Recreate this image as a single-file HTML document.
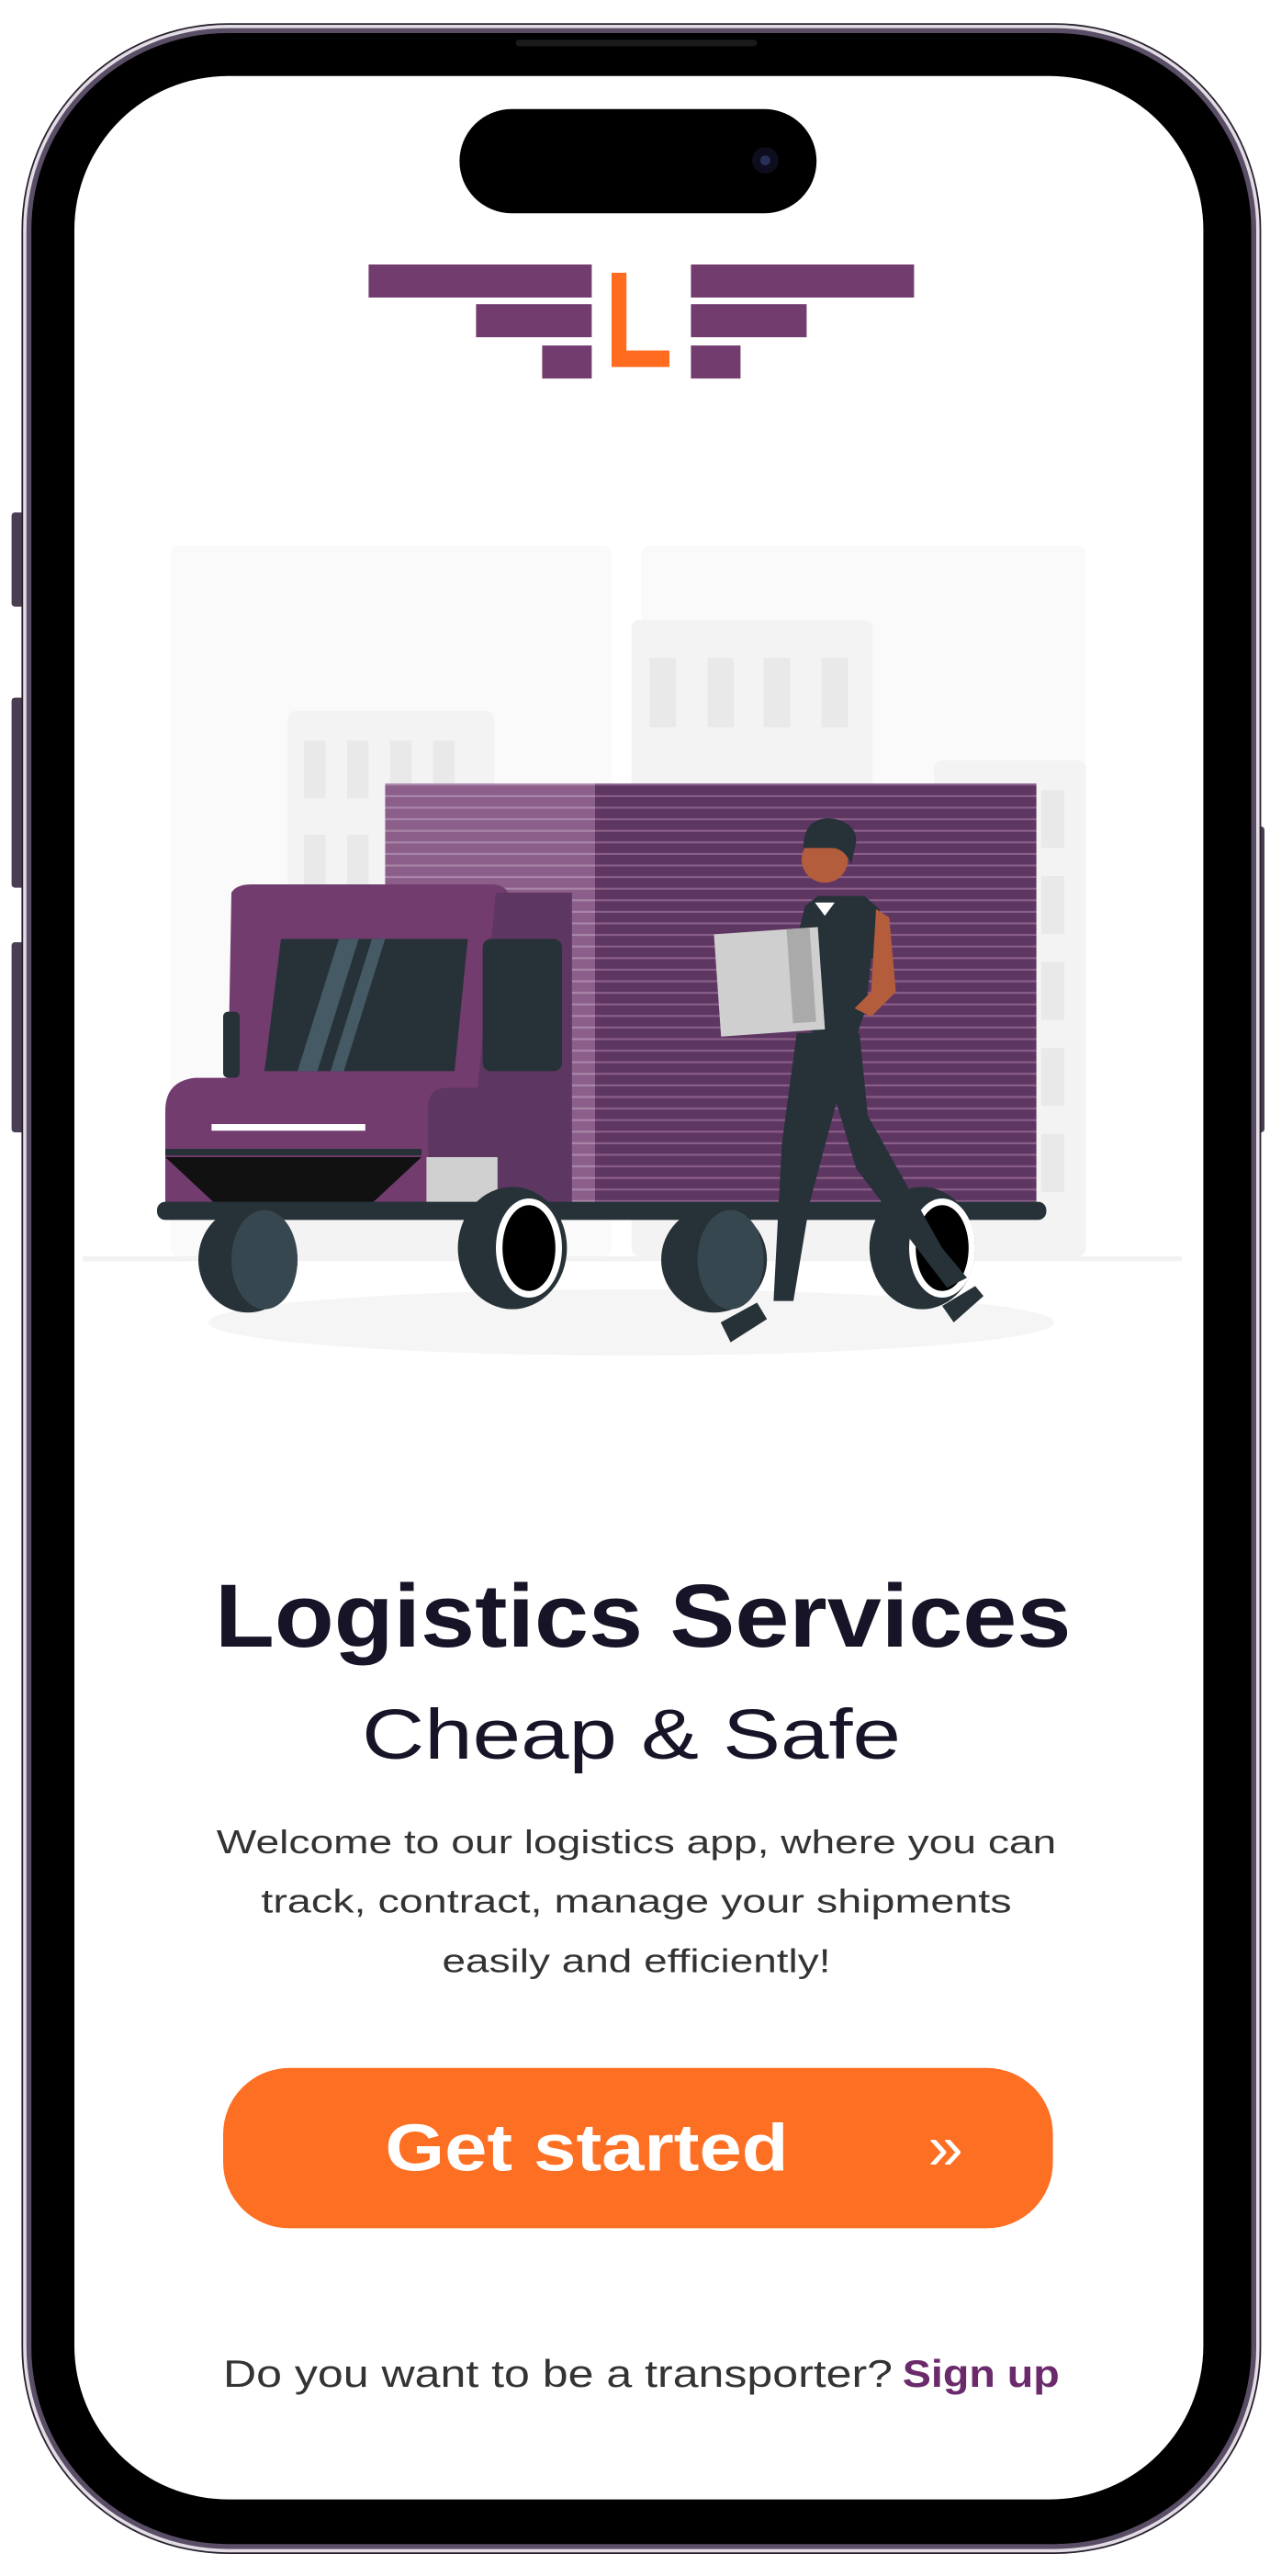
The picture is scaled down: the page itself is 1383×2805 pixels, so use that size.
<!DOCTYPE html>
<html><head><meta charset="utf-8"><style>
html,body{margin:0;padding:0;background:#fff;}
svg{display:block;}
</style></head><body>
<svg width="1383" height="2805" viewBox="0 0 768.33 1558.33" preserveAspectRatio="none" xmlns="http://www.w3.org/2000/svg">
<defs>
<pattern id="st" width="10" height="7" patternUnits="userSpaceOnUse"><rect width="10" height="7" fill="#5e3662"/><rect y="5" width="10" height="1.2" fill="#8a5f88"/></pattern>
<pattern id="st2" width="10" height="7" patternUnits="userSpaceOnUse"><rect width="10" height="7" fill="#8c5f8b"/><rect y="5" width="10" height="1.2" fill="#a986a8"/></pattern>
</defs>
<rect width="768.33" height="1558.33" fill="#fff"/>
<!-- side buttons -->
<rect x="7" y="310" width="8" height="57" rx="2" fill="#4a3f52"/>
<rect x="7" y="422" width="8" height="115" rx="2" fill="#4a3f52"/>
<rect x="7" y="570" width="8" height="115" rx="2" fill="#4a3f52"/>
<rect x="757" y="500" width="8" height="185" rx="2" fill="#4a3f52"/>
<!-- frame -->
<rect x="13" y="14" width="750" height="1531" rx="125" fill="#2a2230"/>
<rect x="14" y="15" width="748" height="1529" rx="124" fill="#e2dde4"/>
<rect x="16" y="17" width="744" height="1525" rx="122" fill="#5a4d66"/>
<rect x="19" y="20" width="738" height="1519" rx="119" fill="#000"/>
<rect x="312" y="24" width="146" height="4" rx="2" fill="#1a1a1a"/>
<rect x="45" y="46" width="683" height="1466" rx="93" fill="#fff"/>
<!-- island -->
<rect x="278" y="66" width="216" height="63" rx="31.5" fill="#000"/>
<circle cx="463" cy="97" r="8" fill="#0d0d1e"/><circle cx="463" cy="97" r="3" fill="#26305a"/>
<!-- logo -->
<g fill="#733c6f">
<rect x="223" y="160" width="135" height="20"/><rect x="418" y="160" width="135" height="20"/>
<rect x="288" y="184" width="70" height="20"/><rect x="418" y="184" width="70" height="20"/>
<rect x="328" y="209" width="30" height="20"/><rect x="418" y="209" width="30" height="20"/>
</g>
<path d="M370 165h9v47h26v10h-35z" fill="#ff6b1f"/>
<!-- illustration background -->
<rect x="103" y="330" width="267" height="430" rx="5" fill="#fafafa"/>
<rect x="388" y="330" width="269" height="430" rx="5" fill="#fafafa"/>
<rect x="174" y="430" width="125" height="330" rx="5" fill="#f3f3f3"/>
<rect x="382" y="375" width="146" height="385" rx="5" fill="#f3f3f3"/>
<rect x="565" y="460" width="92" height="300" rx="5" fill="#f3f3f3"/>
<g fill="#e9e9e9">
<rect x="184" y="448" width="13" height="35"/><rect x="210" y="448" width="13" height="35"/><rect x="236" y="448" width="13" height="35"/><rect x="262" y="448" width="13" height="35"/>
<rect x="184" y="505" width="13" height="35"/><rect x="210" y="505" width="13" height="35"/>
<rect x="393" y="398" width="16" height="42"/><rect x="428" y="398" width="16" height="42"/><rect x="462" y="398" width="16" height="42"/><rect x="497" y="398" width="16" height="42"/>
<rect x="630" y="478" width="14" height="35"/><rect x="630" y="530" width="14" height="35"/><rect x="630" y="582" width="14" height="35"/><rect x="630" y="634" width="14" height="35"/><rect x="630" y="686" width="14" height="35"/>
</g>
<rect x="50" y="760" width="665" height="3" fill="#f2f2f2"/>
<ellipse cx="382" cy="800" rx="256" ry="20" fill="#f5f5f5"/>
<!-- cargo box -->
<rect x="233" y="474" width="127" height="256" fill="url(#st2)"/>
<rect x="360" y="474" width="267" height="256" fill="url(#st)"/>
<!-- cab -->
<path d="M140 540q3-5 12-5h145q12 0 12 12v185h-209v-60q0-18 18-20h20z" fill="#733c6f"/>
<path d="M300 540h46v190h-87v-60q0-12 12-12h18z" fill="#5e3662"/>
<rect x="135" y="612" width="10" height="40" rx="3" fill="#263238"/>
<path d="M170 568h113l-8 80h-115z" fill="#263238"/>
<path d="M205 568h12l-25 80h-12z M225 568h8l-25 80h-8z" fill="#455a64"/>
<rect x="292" y="568" width="48" height="80" rx="5" fill="#263238"/>
<rect x="100" y="695" width="155" height="4" fill="#263238"/>
<rect x="128" y="680" width="93" height="4" fill="#fff"/>
<rect x="258" y="700" width="43" height="28" fill="#d0d0d0"/>
<path d="M100 700h155l-30 28h-95z" fill="#111"/>
<rect x="95" y="727" width="538" height="11" rx="5" fill="#263238"/>
<!-- wheels -->
<g>
<ellipse cx="150" cy="762" rx="30" ry="32" fill="#263238"/><ellipse cx="160" cy="762" rx="20" ry="30" fill="#37474f"/>
<ellipse cx="310" cy="755" rx="33" ry="37" fill="#263238"/><ellipse cx="320" cy="755" rx="20" ry="30" fill="#fff"/><ellipse cx="320" cy="755" rx="16" ry="26" fill="#000"/>
<ellipse cx="432" cy="762" rx="32" ry="32" fill="#263238"/><ellipse cx="442" cy="762" rx="20" ry="30" fill="#37474f"/>
<ellipse cx="558" cy="755" rx="32" ry="37" fill="#263238"/><ellipse cx="570" cy="755" rx="20" ry="30" fill="#fff"/><ellipse cx="570" cy="755" rx="16" ry="26" fill="#000"/>
</g>
<!-- person -->
<path d="M487 548l8 -6h28l9 8l5 30h-10l-3 30l-7 20l-25 0l-5-45l-8 -4z" fill="#263238"/>
<path d="M482 625h38l5 50l45 80l15 18l-12 6l-55-72l-12-40l-16 60l-10 60h-12l5-95z" fill="#263238"/>
<path d="M530 550l8 5l4 45l-15 15l-10-5l10-10z" fill="#b35d3c"/>
<circle cx="499" cy="520" r="14" fill="#b35d3c"/>
<path d="M486 513q0-18 16-18q16 2 16 14l-3 14q-4-10-12-10q-10 0-17 0z" fill="#263238"/>
<path d="M493 546l6 8l6-8z" fill="#fff"/>
<rect x="434" y="563" width="63" height="62" fill="#cfcfcf" transform="rotate(-4 465 594)"/>
<rect x="478" y="563" width="14" height="57" fill="#aaa" transform="rotate(-4 465 594)"/>
<path d="M436 800l22-12l6 10l-22 14z" fill="#263238"/>
<path d="M570 790l20-12l5 6l-18 16z" fill="#263238"/>
<!-- text -->
<text x="389" y="996" text-anchor="middle" font-family="Liberation Sans, sans-serif" font-weight="700" font-size="54" fill="#171427" textLength="518" lengthAdjust="spacingAndGlyphs">Logistics Services</text>
<text x="382" y="1064" text-anchor="middle" font-family="Liberation Sans, sans-serif" font-size="43" fill="#171427" textLength="326" lengthAdjust="spacingAndGlyphs">Cheap &amp; Safe</text>
<g font-family="Liberation Sans, sans-serif" font-size="20" fill="#333" text-anchor="middle">
<text x="385" y="1121" textLength="508" lengthAdjust="spacingAndGlyphs">Welcome to our logistics app, where you can</text>
<text x="385" y="1157" textLength="454" lengthAdjust="spacingAndGlyphs">track, contract, manage your shipments</text>
<text x="385" y="1193" textLength="235" lengthAdjust="spacingAndGlyphs">easily and efficiently!</text>
</g>
<rect x="135" y="1251" width="502" height="97" rx="40" fill="#fd6f22"/>
<text x="355" y="1313" text-anchor="middle" font-family="Liberation Sans, sans-serif" font-weight="700" font-size="40" fill="#fff" textLength="244" lengthAdjust="spacingAndGlyphs">Get started</text>
<text x="572" y="1312" text-anchor="middle" font-family="Liberation Sans, sans-serif" font-size="38" fill="#fff">»</text>
<text x="135" y="1444" font-family="Liberation Sans, sans-serif" font-size="23" fill="#333" textLength="405" lengthAdjust="spacingAndGlyphs">Do you want to be a transporter?</text>
<text x="546" y="1444" font-family="Liberation Sans, sans-serif" font-weight="700" font-size="23" fill="#6b2a6b" textLength="95" lengthAdjust="spacingAndGlyphs">Sign up</text>
</svg>
</body></html>
